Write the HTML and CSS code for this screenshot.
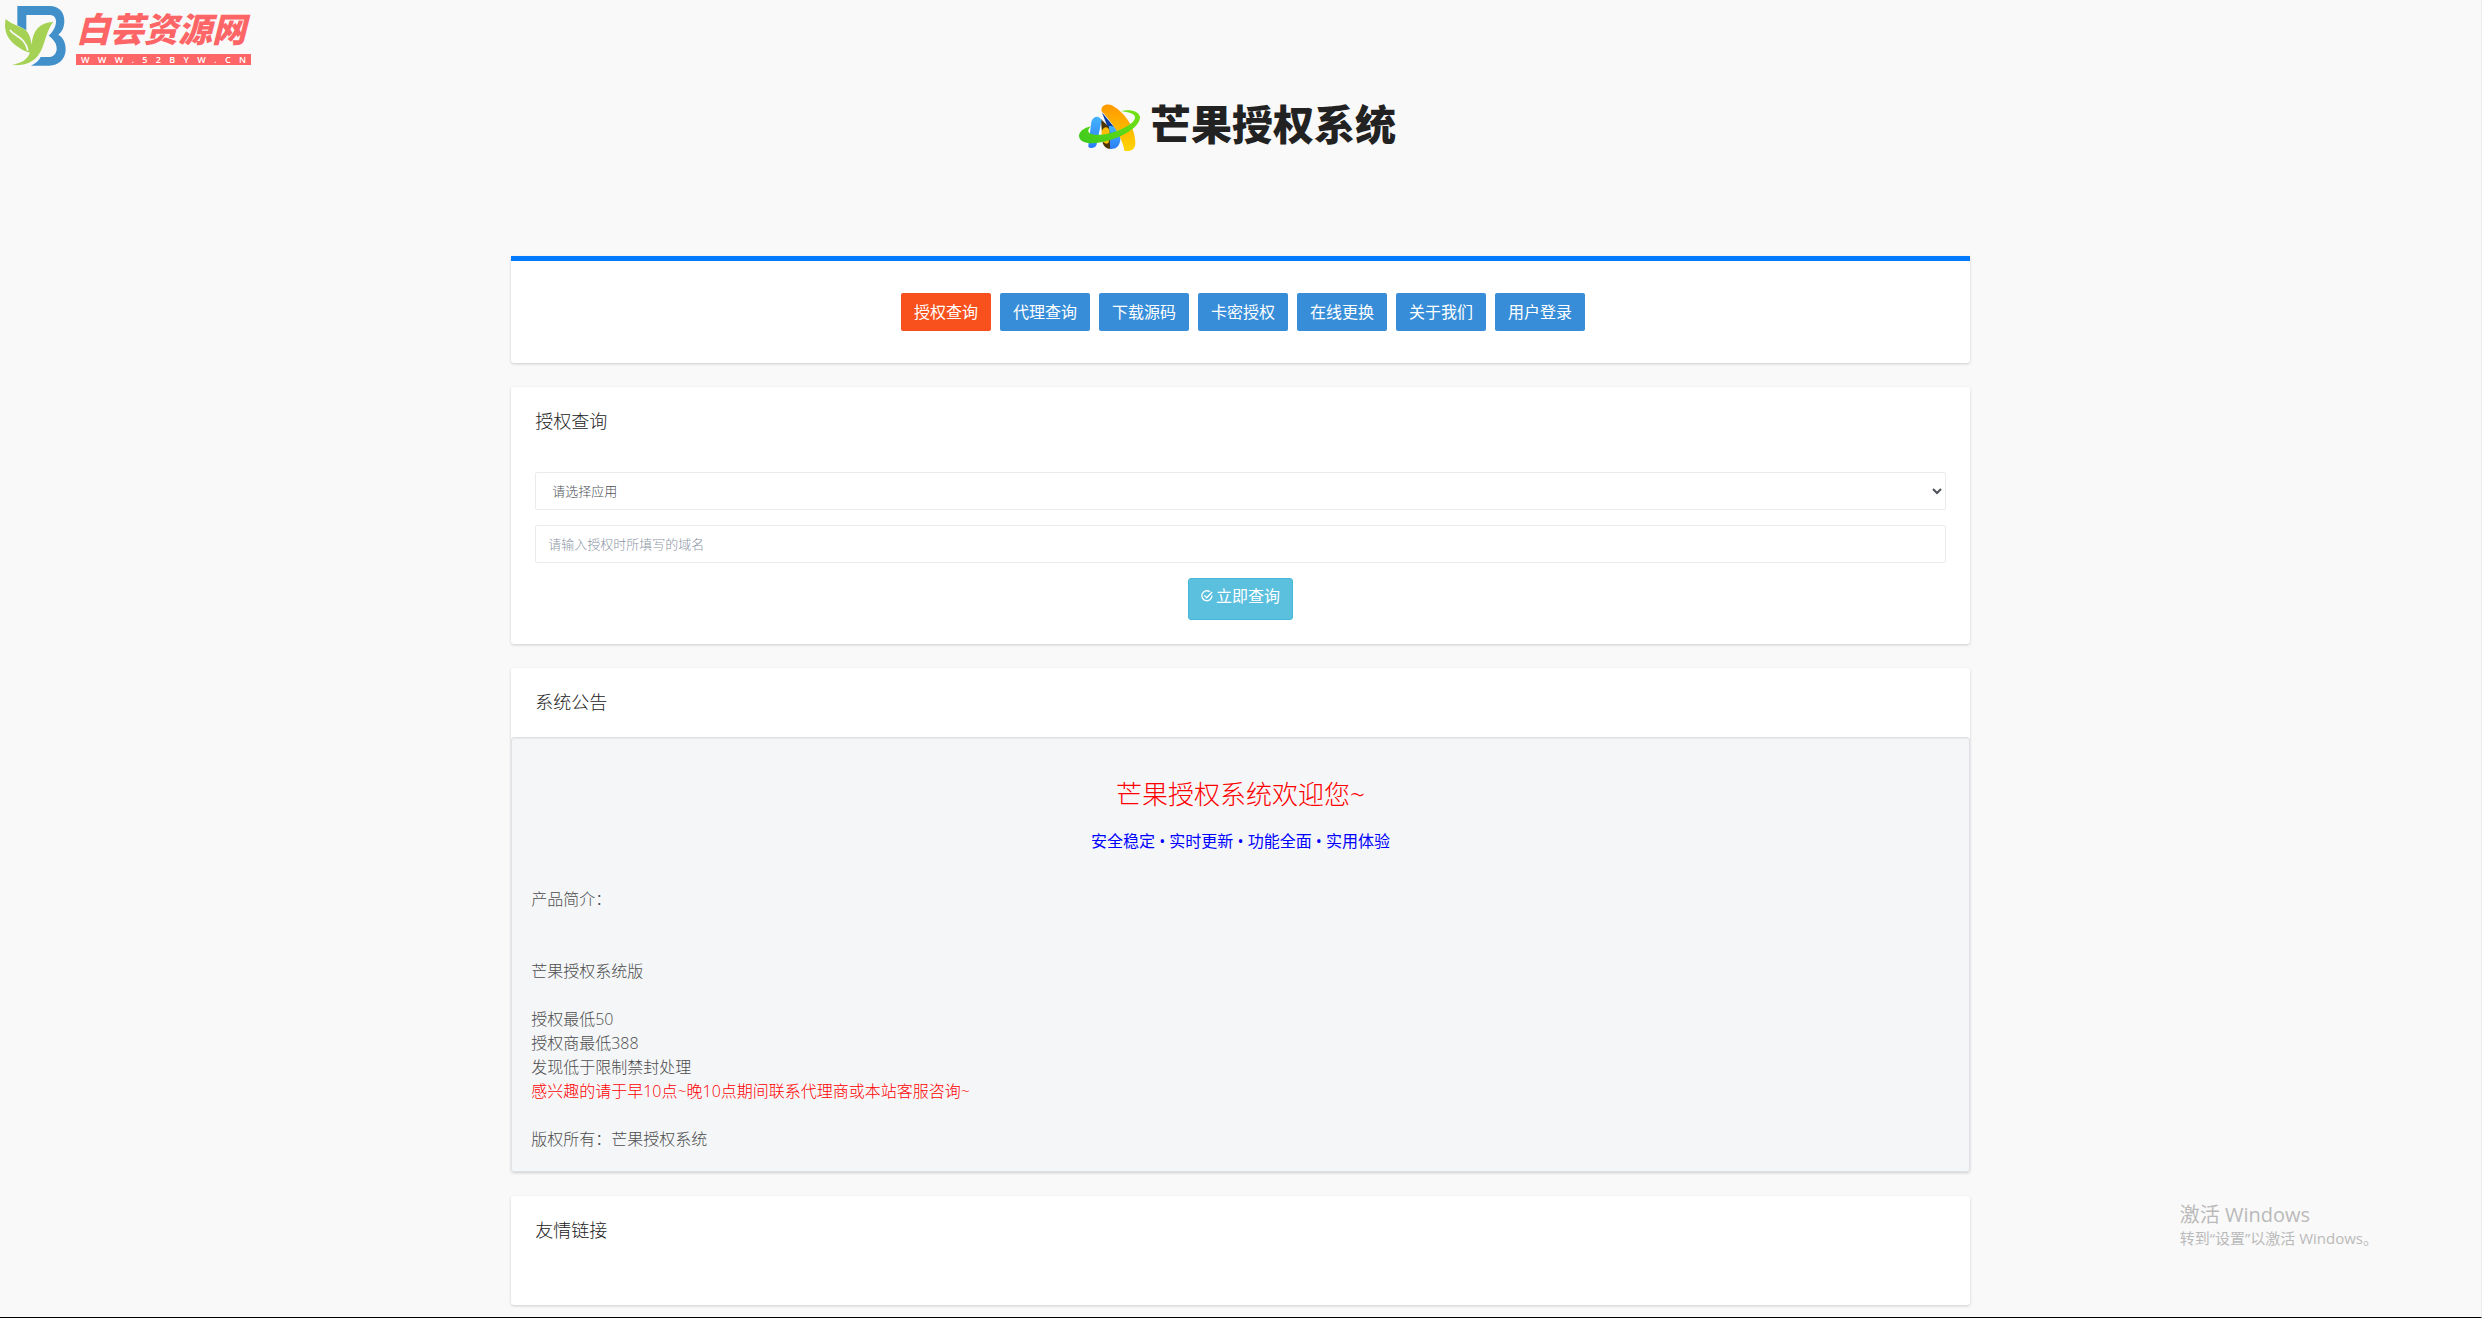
FILE: index.html
```html
<!DOCTYPE html>
<html lang="zh-CN">
<head>
<meta charset="utf-8">
<meta name="viewport" content="width=device-width, initial-scale=1">
<title>芒果授权系统</title>
<link rel="stylesheet" href="styles.css">
</head>
<body>
<div class="page">
  <a class="site-badge" href="#">
    <svg class="site-badge-mark" viewBox="0 0 201 201" aria-hidden="true">
      <path fill="#4190ca" d="M52 18H148C180 18 193 40 193 62C193 82 186 95 175 104C190 113 197 128 197 148C197 178 175 197 148 197H93C108 190 117 181 122 171H146C160 171 170 160 170 146C170 128 160 118 146 107C158 96 168 82 168 64C168 51 160 45 148 45H79V91L52 76Z"/>
      <path fill="#a5d155" d="M17 57C34 73 60 78 76 90C88 100 92 115 95 134C98 92 118 68 160 66C145 84 141 104 131 132C120 168 98 192 60 195C50 196 42 195 37 193C66 190 82 178 90 158C68 152 24 128 17 92C14 80 15 68 17 57Z"/>
      <path fill="none" stroke="#f9f9f9" stroke-width="5" stroke-linecap="round" d="M31 91C44 110 76 112 83 150"/>
    </svg>
    <span class="site-badge-text">
      <span class="site-badge-name">白芸资源网</span>
      <span class="site-badge-url">W W W . 5 2 B Y W . C N</span>
    </span>
  </a>

  <header class="masthead">
    <svg class="masthead-mark" viewBox="50 36 196 152" aria-hidden="true">
      <defs>
        <linearGradient id="orange" x1="0" y1="0" x2="0" y2="1"><stop offset="0" stop-color="#ff9800"/><stop offset="1" stop-color="#ffd500"/></linearGradient>
        <linearGradient id="blue" x1="0" y1="0" x2="0" y2="1"><stop offset="0" stop-color="#45b4ff"/><stop offset="1" stop-color="#2a7df5"/></linearGradient>
        <linearGradient id="green" x1="0" y1="1" x2="1" y2="0"><stop offset="0" stop-color="#3cc91e"/><stop offset="1" stop-color="#76e312"/></linearGradient>
      </defs>
      <path fill="#0b3fa6" d="M125 66L160 108L165 150L150 130Z"/>
      <path fill="#4a3508" d="M122 86L148 112L156 176C140 178 132 170 128 160Z"/>
      <path fill="url(#blue)" d="M146 108C164 104 180 122 181 142C181 158 176 170 164 175L150 177C148 150 150 130 146 108Z"/>
      <path fill="#ffbf00" d="M124 124C130 108 144 106 148 122L146 156C140 166 130 158 124 150Z"/>
      <path fill="url(#blue)" d="M84 169L93 96C98 75 119 74 124 92L109 164C105 175 88 177 84 169Z"/>
      <path fill="url(#orange)" d="M124 63C121 45 140 38 155 45C194 66 226 112 226 160C225 182 206 184 193 182C186 138 152 92 124 63Z"/>
      <path fill="url(#green)" d="M183 62C212 56 240 64 240 82C238 110 192 138 152 149C108 164 58 166 56 138C56 124 70 113 92 108C84 116 80 124 90 130C112 140 152 130 182 118C206 106 226 94 225 80C224 70 205 65 183 62Z"/>
    </svg>
    <h1 class="masthead-name">芒果授权系统</h1>
  </header>

  <main class="container">
    <nav class="card nav-card">
      <a class="nav-link is-active" href="#">授权查询</a>
      <a class="nav-link" href="#">代理查询</a>
      <a class="nav-link" href="#">下载源码</a>
      <a class="nav-link" href="#">卡密授权</a>
      <a class="nav-link" href="#">在线更换</a>
      <a class="nav-link" href="#">关于我们</a>
      <a class="nav-link" href="#">用户登录</a>
    </nav>

    <section class="card">
      <h2 class="card-title">授权查询</h2>
      <form class="query-form">
        <select class="field field-select" aria-label="请选择应用">
          <option>请选择应用</option>
        </select>
        <input class="field" type="text" placeholder="请输入授权时所填写的域名" aria-label="域名">
        <button class="submit" type="button">
          <svg class="submit-icon" viewBox="0 0 12 12" aria-hidden="true">
            <path fill="none" stroke="#fff" stroke-width="1.3" d="M8.8 1.7A5 5 0 1 0 10.9 5.6M3.4 5.4L5.7 7.7L11.2 2"/>
          </svg>
          <span>立即查询</span>
        </button>
      </form>
    </section>

    <section class="card">
      <h2 class="card-title">系统公告</h2>
      <div class="notice">
        <p class="notice-heading">芒果授权系统欢迎您~</p>
        <p class="notice-slogan">安全稳定 • 实时更新 • 功能全面 • 实用体验</p>
        <p class="notice-text">产品简介：<br><br><br>芒果授权系统版<br><br>授权最低50<br>授权商最低388<br>发现低于限制禁封处理<br><span class="notice-alert">感兴趣的请于早10点~晚10点期间联系代理商或本站客服咨询~</span><br><br>版权所有：芒果授权系统</p>
      </div>
    </section>

    <section class="card links-card">
      <h2 class="card-title">友情链接</h2>
    </section>
  </main>

  <aside class="activation">
    <p class="activation-title">激活 Windows</p>
    <p class="activation-hint">转到“设置”以激活 Windows。</p>
  </aside>
</div>
</body>
</html>
```
FILE: styles.css
```css
* {
  box-sizing: border-box;
}

body {
  margin: 0;
  background: #f9f9f9;
  color: #4d4d4d;
  font-family: "Open Sans", "Noto Sans CJK SC", sans-serif;
  font-size: 16px;
  font-weight: 300;
  line-height: 24px;
}

h1, h2, p {
  margin: 0;
  font-weight: inherit;
}

a {
  text-decoration: none;
}

.page {
  position: relative;
  min-height: 100vh;
  padding-bottom: 12px;
  border-right: 1px solid #ececec;
  border-bottom: 1px solid #000;
}

/* corner badge, lies over the page */
.site-badge {
  position: absolute;
  top: 0;
  left: 0;
  display: flex;
  gap: 9px;
}

.site-badge-mark {
  width: 67px;
  height: 67px;
}

.site-badge-text {
  display: flex;
  flex-direction: column;
  justify-content: flex-end;
  gap: 5px;
  width: 175px;
  padding-bottom: 2px;
}

.site-badge-name {
  color: #fe6566;
  font-size: 34px;
  font-weight: 900;
  font-style: italic;
  line-height: 40px;
}

.site-badge-url {
  padding: 0 5px;
  background: #fe6566;
  color: #fff;
  font-size: 9px;
  font-weight: 600;
  line-height: 11px;
  text-align-last: justify;
}

.masthead {
  display: flex;
  justify-content: center;
  align-items: flex-start;
  gap: 8px;
  height: 256px;
  padding: 102px 8px 0 0;
}

.masthead-mark {
  width: 65px;
  height: 51px;
}

.masthead-name {
  color: #222;
  font-size: 41px;
  font-weight: 900;
  line-height: 44px;
}

.container {
  display: flex;
  flex-direction: column;
  gap: 24px;
  width: 60%;
  margin: 0 auto;
  padding: 0 15px;
}

.card {
  background: #fff;
  border-radius: 3px;
  box-shadow: 0 1px 3px rgba(0, 0, 0, 0.18);
}

.card-title {
  padding: 20px 24px 21px;
  color: #222;
  font-size: 18px;
  line-height: 28px;
}

.nav-card {
  display: flex;
  flex-wrap: wrap;
  justify-content: center;
  gap: 9px;
  padding: 32px 20px 32px 25px;
  border-top: 5px solid #007bff;
  border-radius: 0 0 3px 3px;
}

.nav-link {
  padding: 7px 13px;
  border-radius: 2px;
  background: #378dd8;
  color: #fff;
  font-weight: 400;
}

.nav-link.is-active {
  background: #f8511d;
}

.query-form {
  display: flex;
  flex-direction: column;
  align-items: center;
  gap: 15px;
  padding: 16px 24px 24px;
}

.field {
  width: 100%;
  height: 38px;
  padding: 0 12px;
  border: 1px solid #ebebeb;
  border-radius: 2px;
  background: #fff;
  color: #4d5259;
  font: inherit;
  font-size: 13px;
}

.field::placeholder {
  color: #8b95a5;
}

.submit {
  display: flex;
  align-items: center;
  gap: 3px;
  padding: 5px 12px 11px;
  border: 1px solid #46b8da;
  border-radius: 3px;
  background: #5bc0de;
  color: #fff;
  font: inherit;
  font-weight: 400;
}

.submit-icon {
  width: 12px;
  height: 12px;
}

.notice {
  padding: 36px 19px 20px;
  border: 1px solid #dfe1e6;
  border-radius: 3px;
  background: #f4f6f8;
  box-shadow: inset 0 1px 1px rgba(0, 0, 0, 0.05);
}

.notice-heading {
  color: #f00;
  font-size: 26px;
  line-height: 40px;
  text-align: center;
}

.notice-slogan {
  margin: 15px 0 34px;
  color: #00f;
  font-weight: 400;
  text-align: center;
}

.notice-alert {
  color: #f00;
}

.links-card {
  padding-bottom: 40px;
}

/* system watermark, lies over the page */
.activation {
  position: absolute;
  right: 103px;
  bottom: 68px;
  color: #bababa;
  font-weight: 400;
}

.activation-title {
  font-size: 20px;
}

.activation-hint {
  font-size: 15px;
  line-height: 22px;
}
```
